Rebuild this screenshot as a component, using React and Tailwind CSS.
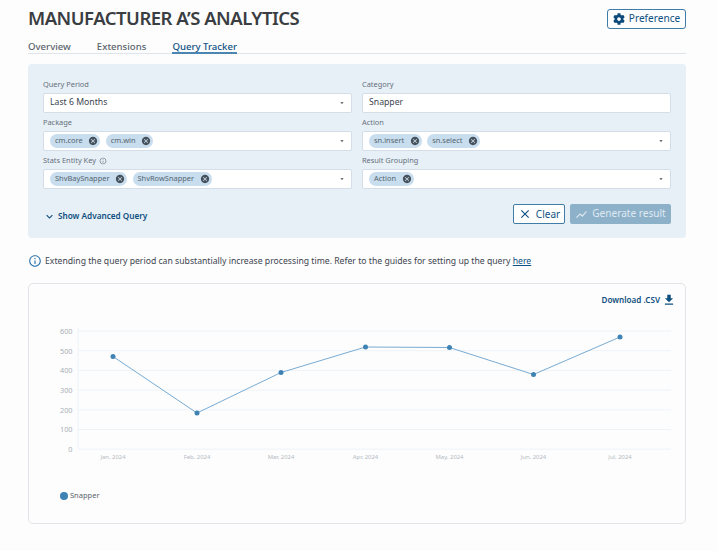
import React from "react";
import { FaCog } from "react-icons/fa";
import { MdCancel, MdFileDownload, MdShowChart, MdExpandMore, MdArrowDropDown, MdClose, MdInfoOutline } from "react-icons/md";

const points = [
    { label: "Jan, 2024", x: 84, y: 38.5 },
    { label: "Feb, 2024", x: 168, y: 95 },
    { label: "Mar, 2024", x: 252, y: 54.5 },
    { label: "Apr, 2024", x: 336.5, y: 29 },
    { label: "May, 2024", x: 420.5, y: 29.5 },
    { label: "Jun, 2024", x: 504.5, y: 56.5 },
    { label: "Jul, 2024", x: 591, y: 19 },
]
const ticks = [600, 500, 400, 300, 200, 100, 0]

const Chip = ({ text }) => (
    <span className="flex items-center h-[14px] rounded-full bg-[#c8ddee] pl-[5px] pr-[2px] gap-[5.5px] text-[7.45px] text-[#55656f]">
        {text}
        <MdCancel className="text-[10px] text-[#47525c]" />
    </span>
)

const Field = ({ label, info, children, arrow, className }) => (
    <div className={className}>
        <div className="flex items-center gap-[3px] h-[16px] text-[7.4px] text-[#66717b]">
            {label}
            {info && <MdInfoOutline className="text-[8px]" />}
        </div>
        <div className="flex items-center justify-between h-[20px] bg-white border border-[#d3dee8] rounded-[2px] pl-[6px] pr-[5px] text-[8.7px] text-[#3d4650]">
            <div className="flex items-center gap-[5.5px]">{children}</div>
            {arrow && <MdArrowDropDown className="text-[8px] text-[#3d4650]" />}
        </div>
    </div>
)

const Chart = () => (
    <svg width="656" height="150" className="block" fontFamily="'Noto Sans', sans-serif">
        {ticks.map((t, i) => {
            const y = 13 + i * 19.7
            return (
                <g key={t}>
                    <line x1="49" x2="642" y1={y} y2={y} stroke="#eef3f8" strokeWidth="1" />
                    <text x="43.5" y={y + 2.8} textAnchor="end" fontSize="7.3" fill="#a9b0b8">{t}</text>
                </g>
            )
        })}
        <line x1="49" x2="49" y1="10" y2="131" stroke="#eef3f8" strokeWidth="1" />
        <polyline fill="none" stroke="#79abd2" strokeWidth="1" points={points.map((p) => `${p.x},${p.y}`).join(" ")} />
        {points.map((p) => (
            <g key={p.label}>
                <circle cx={p.x} cy={p.y} r="2.5" fill="#3f83b5" />
                <text x={p.x} y="141" textAnchor="middle" fontSize="5.9" fill="#b4bac1">{p.label}</text>
            </g>
        ))}
    </svg>
)

const App = () => {
    return (
        <div className="w-[717px] h-[551px] bg-[#fdfdfd] pl-[28px] pr-[31px] pt-[7px] font-['Noto_Sans',sans-serif] overflow-hidden">
            <div className="flex items-center justify-between h-[23px]">
                <h1 className="text-[18.5px] tracking-[-0.5px] font-semibold text-[#3a3d42] leading-none">MANUFACTURER A’S ANALYTICS</h1>
                <button className="flex items-center gap-[4px] h-[20px] w-[79px] justify-center border border-[#3f7ca8] rounded-[3px] text-[10.1px] text-[#0f5283]">
                    <FaCog className="text-[12px] text-[#0b4a7a]" />
                    Preference
                </button>
            </div>
            <div className="flex gap-[26px] mt-[8px] h-[16px] border-b border-[#dfe5ec] text-[9.6px] font-medium text-[#5b646d]">
                <span className="h-[16px] leading-[18px]">Overview</span>
                <span className="h-[16px] leading-[18px]">Extensions</span>
                <span className="h-[16px] leading-[18px] text-[#0f5283] border-b-2 border-[#4a86b1]">Query Tracker</span>
            </div>
            <div className="mt-[10px] h-[174px] bg-[#e7eff7] rounded-[4px] px-[15px] pt-[13px]">
                <div className="grid grid-cols-[309px_309px] gap-x-[10px] gap-y-[2px]">
                    <Field label="Query Period" arrow>Last 6 Months</Field>
                    <Field label="Category">Snapper</Field>
                    <Field label="Package" arrow><Chip text="cm.core" /><Chip text="cm.win" /></Field>
                    <Field label="Action" arrow><Chip text="sn.insert" /><Chip text="sn.select" /></Field>
                    <Field label="Stats Entity Key" info arrow><Chip text="ShvBaySnapper" /><Chip text="ShvRowSnapper" /></Field>
                    <Field label="Result Grouping" arrow><Chip text="Action" /></Field>
                </div>
                <div className="flex items-center justify-between mt-[15px]">
                    <div className="flex items-center gap-[2px] pt-[5px] text-[8.2px] font-semibold text-[#0f4f7e]">
                        <MdExpandMore className="text-[13px]" />
                        Show Advanced Query
                    </div>
                    <div className="flex gap-[5px]">
                        <button className="flex items-center justify-center gap-[4px] w-[52px] h-[20px] bg-white border border-[#3f7ca8] rounded-[2px] text-[10px] text-[#0f5283]">
                            <MdClose className="text-[14px]" />
                            Clear
                        </button>
                        <button className="flex items-center justify-center gap-[4px] w-[101px] h-[20px] bg-[#8eb1ca] rounded-[2px] text-[10.1px] text-[#dfe9f1]">
                            <MdShowChart className="text-[13px]" />
                            Generate result
                        </button>
                    </div>
                </div>
            </div>
            <div className="flex items-center gap-[3px] mt-[15px] h-[16px] text-[8.66px] text-[#3d4650]">
                <MdInfoOutline className="text-[14px] text-[#2f76ad]" />
                <span>Extending the query period can substantially increase processing time. Refer to the guides for setting up the query <span className="text-[#0f5283] underline">here</span></span>
            </div>
            <div className="mt-[14px] h-[241px] border border-[#e1e4e8] rounded-[5px] bg-[#fdfdfd]">
                <div className="flex items-center justify-end gap-[2px] h-[33px] pb-[1px] pr-[9px] text-[8.1px] font-semibold text-[#0f4f7e]">
                    Download .CSV
                    <MdFileDownload className="text-[14px]" />
                </div>
                <div className="pt-[1px]">
                    <Chart />
                </div>
                <div className="flex items-center gap-[2.5px] pl-[31px] mt-[22px] h-[12px] text-[7.5px] text-[#5b646d]">
                    <span className="w-[7.5px] h-[7.5px] rounded-full bg-[#3f83b5]"></span>
                    Snapper
                </div>
            </div>
        </div>
    )
}

export default App;
